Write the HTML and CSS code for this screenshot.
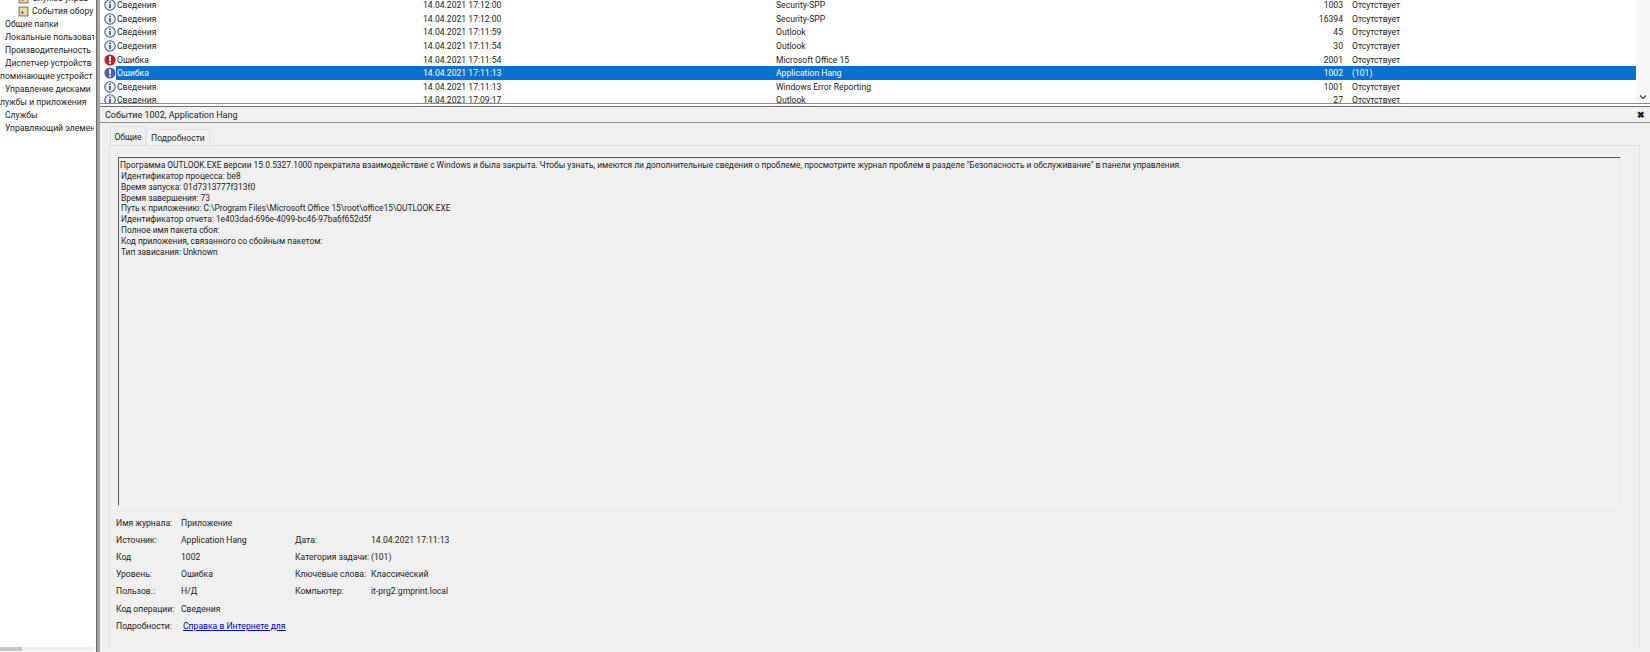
FILE: index.html
```html
<!DOCTYPE html>
<html lang="ru">
<head>
    <meta charset="UTF-8">
    <title>Просмотр событий</title>
    <link rel="stylesheet" href="styles.css">
</head>
<body>
    <svg class="defs" width="0" height="0">
        <symbol id="ico-info" viewBox="0 0 12 12">
            <circle cx="6" cy="6" r="5.2" fill="#eef3fa" stroke="#3f5f95" stroke-width="1.1"/>
            <rect x="5.2" y="5" width="1.6" height="4.2" fill="#2a4f96"/>
            <rect x="5.2" y="2.6" width="1.6" height="1.5" fill="#2a4f96"/>
        </symbol>
        <symbol id="ico-error" viewBox="0 0 12 12">
            <circle cx="6" cy="6" r="5.6" fill="#b9222c"/>
            <rect x="5" y="2.2" width="2" height="5" fill="#fff"/>
            <rect x="5" y="8" width="2" height="1.8" fill="#fff"/>
        </symbol>
        <symbol id="ico-error-sel" viewBox="0 0 12 12">
            <circle cx="6" cy="6" r="5.6" fill="#4a62a8"/>
            <rect x="5" y="2.2" width="2" height="5" fill="#e4e8f4"/>
            <rect x="5" y="8" width="2" height="1.8" fill="#e4e8f4"/>
        </symbol>
    </svg>

    <aside class="tree">
        <ul>
            <li class="lvl2"><svg class="tree-ico" viewBox="0 0 10 10"><rect x="1" y="1" width="8" height="8" fill="#e8dca8" stroke="#777"/><rect x="3" y="5" width="2" height="2" fill="#c33"/></svg>Служба управ</li>
            <li class="lvl2"><svg class="tree-ico" viewBox="0 0 10 10"><rect x="1" y="1" width="8" height="8" fill="#e8dca8" stroke="#777"/><rect x="3" y="5" width="2" height="2" fill="#c33"/></svg>События обору</li>
            <li class="lvl1">Общие папки</li>
            <li class="lvl1">Локальные пользовате</li>
            <li class="lvl1">Производительность</li>
            <li class="lvl1">Диспетчер устройств</li>
            <li>поминающие устройст</li>
            <li class="lvl1">Управление дисками</li>
            <li>лужбы и приложения</li>
            <li class="lvl1">Службы</li>
            <li class="lvl1">Управляющий элемен</li>
        </ul>
        <div class="tree-scroll"><span></span></div>
    </aside>

    <main class="main">
        <section class="events">
            <div class="rows">
                <div class="row"><span class="lvl"><svg><use href="#ico-info"/></svg>Сведения</span><span>14.04.2021 17:12:00</span><span>Security-SPP</span><span class="code">1003</span><span>Отсутствует</span></div>
                <div class="row"><span class="lvl"><svg><use href="#ico-info"/></svg>Сведения</span><span>14.04.2021 17:12:00</span><span>Security-SPP</span><span class="code">16394</span><span>Отсутствует</span></div>
                <div class="row"><span class="lvl"><svg><use href="#ico-info"/></svg>Сведения</span><span>14.04.2021 17:11:59</span><span>Outlook</span><span class="code">45</span><span>Отсутствует</span></div>
                <div class="row"><span class="lvl"><svg><use href="#ico-info"/></svg>Сведения</span><span>14.04.2021 17:11:54</span><span>Outlook</span><span class="code">30</span><span>Отсутствует</span></div>
                <div class="row"><span class="lvl"><svg><use href="#ico-error"/></svg>Ошибка</span><span>14.04.2021 17:11:54</span><span>Microsoft Office 15</span><span class="code">2001</span><span>Отсутствует</span></div>
                <div class="row selected"><span class="lvl"><svg><use href="#ico-error-sel"/></svg><b>Ошибка</b></span><span>14.04.2021 17:11:13</span><span>Application Hang</span><span class="code">1002</span><span>(101)</span></div>
                <div class="row"><span class="lvl"><svg><use href="#ico-info"/></svg>Сведения</span><span>14.04.2021 17:11:13</span><span>Windows Error Reporting</span><span class="code">1001</span><span>Отсутствует</span></div>
                <div class="row"><span class="lvl"><svg><use href="#ico-info"/></svg>Сведения</span><span>14.04.2021 17:09:17</span><span>Outlook</span><span class="code">27</span><span>Отсутствует</span></div>
            </div>
            <div class="vscroll">
                <svg width="8" height="6" viewBox="0 0 8 6"><path d="M1 1.5 L4 4.5 L7 1.5" fill="none" stroke="#444" stroke-width="1.2"/></svg>
            </div>
        </section>

        <section class="detail">
            <header class="detail-title">
                <span>Событие 1002, Application Hang</span>
                <span class="close">✖</span>
            </header>
            <div class="tabs">
                <span class="tab active">Общие</span>
                <span class="tab">Подробности</span>
            </div>
            <div class="tab-body">
                <div class="message">
                    <p class="first">Программа OUTLOOK.EXE версии 15.0.5327.1000 прекратила взаимодействие с Windows и была закрыта. Чтобы узнать, имеются ли дополнительные сведения о проблеме, просмотрите журнал проблем в разделе "Безопасность и обслуживание" в панели управления.</p>
                    <p>Идентификатор процесса: be8</p>
                    <p>Время запуска: 01d7313777f313f0</p>
                    <p>Время завершения: 73</p>
                    <p>Путь к приложению: C:\Program Files\Microsoft Office 15\root\office15\OUTLOOK.EXE</p>
                    <p>Идентификатор отчета: 1e403dad-696e-4099-bc46-97ba6f652d5f</p>
                    <p>Полное имя пакета сбоя:</p>
                    <p>Код приложения, связанного со сбойным пакетом:</p>
                    <p>Тип зависания: Unknown</p>
                </div>
                <div class="props">
                    <span>Имя журнала:</span><span>Приложение</span><span></span><span></span>
                    <span>Источник:</span><span>Application Hang</span><span>Дата:</span><span>14.04.2021 17:11:13</span>
                    <span>Код</span><span>1002</span><span>Категория задачи:</span><span>(101)</span>
                    <span>Уровень:</span><span>Ошибка</span><span>Ключевые слова:</span><span>Классический</span>
                    <span>Пользов.:</span><span>Н/Д</span><span>Компьютер:</span><span>it-prg2.gmprint.local</span>
                    <span>Код операции:</span><span>Сведения</span><span></span><span></span>
                    <span>Подробности:</span><a class="help" href="#">Справка в Интернете для</a><span></span><span></span>
                </div>
            </div>
        </section>
    </main>
</body>
</html>
```

FILE: styles.css
```css
* {
    box-sizing: border-box;
}

html, body {
    height: 100%;
}

body {
    display: flex;
    margin: 0;
    height: 652px;
    overflow: hidden;
    background-color: #fff;
    color: #1c1c1c;
    font-family: 'Roboto', 'Open Sans', sans-serif;
    font-size: 8.6px;
}

.defs {
    position: absolute;
}

/* left tree */
.tree {
    display: flex;
    flex-direction: column;
    justify-content: space-between;
    flex: 0 0 97px;
    height: 652px;
    overflow: hidden;
    border-right: 1px solid #6a6a6a;
}

.tree ul {
    margin: -8px 0 0;
    padding: 0;
    width: 94px;
    overflow: hidden;
    list-style: none;
}

.tree li {
    display: flex;
    align-items: center;
    height: 12.95px;
    white-space: nowrap;
    font-size: 8.6px;
}

.tree .lvl1 {
    padding-left: 5px;
}

.tree .lvl2 {
    padding-left: 18px;
}

.tree-ico {
    flex: none;
    width: 11px;
    height: 11px;
    margin-right: 3px;
}

.tree-scroll {
    height: 4px;
    margin-bottom: 1px;
    width: 94px;
    background: #f0f0f0;
}

.tree-scroll span {
    display: block;
    width: 22px;
    height: 4px;
    background: #c4c4c4;
}

.main {
    flex: 1;
    display: flex;
    flex-direction: column;
    min-width: 0;
    border-left: 3px solid #a4a4a4;
}

/* event list */
.events {
    display: flex;
    flex: 0 0 104px;
    overflow: hidden;
    border-bottom: 1px solid #8a8a8a;
}

.rows {
    flex: 1;
    margin-top: -1.5px;
}

.row {
    display: grid;
    grid-template-columns: 323px 353px 525px 42px 293px;
    align-items: center;
    height: 13.6px;
    white-space: nowrap;
}

.row .lvl {
    display: flex;
    align-items: center;
    padding-left: 4px;
}

.row svg {
    flex: none;
    width: 12px;
    height: 12px;
    margin-right: 1px;
}

.row .code {
    text-align: right;
}

.row span:last-child {
    padding-left: 9px;
}

.row.selected {
    color: #fff;
    background: linear-gradient(to right, #fff 16px, #0a70d0 16px);
}

.row.selected b {
    font-weight: normal;
}

.vscroll {
    display: flex;
    align-items: flex-end;
    justify-content: center;
    flex: 0 0 14px;
    padding-bottom: 3px;
    background-color: #f6f6f6;
}

/* detail pane */
.detail {
    flex: 1;
    display: flex;
    flex-direction: column;
    margin-top: 2px;
    border-top: 1px solid #6e6e6e;
    background-color: #f0f0f0;
    min-height: 0;
}

.detail-title {
    display: flex;
    justify-content: space-between;
    align-items: center;
    flex: 0 0 16px;
    padding: 1px 5px 0 5px;
    border-bottom: 1px solid #8f8f8f;
    font-size: 9px;
}

.close {
    font-size: 9px;
    font-weight: bold;
}

.tabs {
    display: flex;
    flex: 0 0 22px;
    align-items: flex-end;
    padding-left: 10px;
}

.tab {
    display: flex;
    align-items: center;
    justify-content: center;
    height: 16px;
    padding: 1px 4px 0;
    background-color: #f3f3f3;
    border: 1px solid #e2e2e2;
    border-bottom: none;
}

.tab.active {
    width: 36px;
    height: 19px;
    background-color: #f0f0f0;
}

.tab-body {
    flex: 1;
    margin: 0 10px 2px 9px;
    padding: 11px 18px 0 8px;
    border: 1px solid #e2e2e2;
    border-bottom-color: #fafafa;
}

.message {
    height: 349px;
    border-top: 1px solid #5a5a5a;
    border-left: 1px solid #5a5a5a;
    border-right: 1px solid #e8e8e8;
    border-bottom: 1px solid #fafafa;
    padding: 2px 0 0 1px;
    font-size: 8.4px;
    line-height: 10.85px;
}

.message p {
    margin: 0;
    padding-left: 1px;
    white-space: nowrap;
}

.message .first {
    padding-left: 0;
}

.props {
    display: grid;
    grid-template-columns: 65px 114px 76px 1fr;
    grid-auto-rows: 17.2px;
    align-items: center;
    margin-top: 8px;
    margin-left: -2px;
}

.help {
    padding-left: 2px;
    color: #0000d8;
    text-decoration: underline;
}
```
